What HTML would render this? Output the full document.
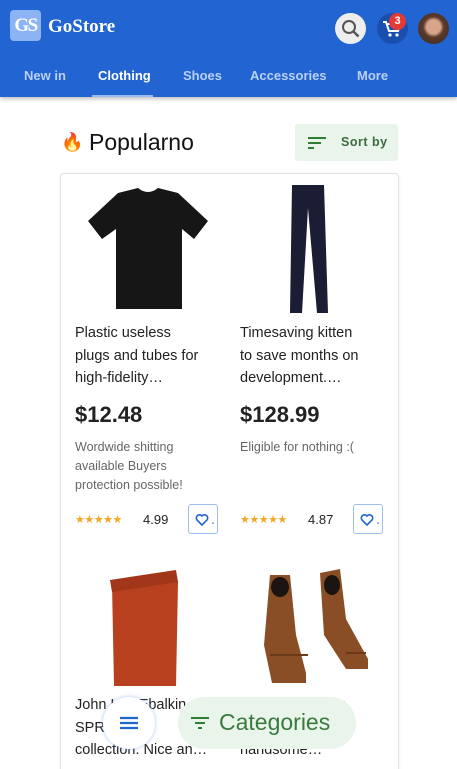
<!DOCTYPE html>
<html><head><meta charset="utf-8"><style>
*{box-sizing:border-box;margin:0;padding:0}
html,body{width:457px;height:769px;overflow:hidden}
body{background:#fff;font-family:"Liberation Sans",sans-serif;position:relative}
.hdr{position:absolute;left:0;top:0;width:457px;height:97px;background:#2264d1;box-shadow:0 2px 4px rgba(0,0,0,.25)}
.logo{position:absolute;left:10px;top:10px;width:31px;height:31px;background:#8cb4f5;border-radius:4px;color:#fff;font:bold 19px "Liberation Serif",serif;text-align:center;line-height:31px;letter-spacing:-1.5px}
.brand{position:absolute;left:48px;top:16px;color:#fff;font:bold 19px "Liberation Serif",serif}
.tabs{position:absolute;top:68px;font-size:13px;font-weight:bold;color:#b9d0f7}
.tab{position:absolute;white-space:nowrap}
.circ{position:absolute;top:13px;width:31px;height:31px;border-radius:50%}
.card{position:absolute;left:60px;top:173px;width:339px;height:600px;border:1px solid #e3e3e3;border-radius:4px;box-shadow:0 1px 3px rgba(0,0,0,.08)}
.t{position:absolute;font-size:14.5px;line-height:22.5px;color:#222}
.p{position:absolute;font-size:22px;font-weight:bold;color:#222}
.s{position:absolute;font-size:12.5px;line-height:19px;color:#666}
.st{position:absolute;color:#f5a623;font-size:11px;letter-spacing:-0.5px}
.r{position:absolute;font-size:13px;color:#222}
.hb{position:absolute;width:30px;height:30px;border:1px solid #9dbcf2;border-radius:3px}
</style></head><body>
<div class="hdr">
 <div class="logo">GS</div>
 <div class="brand">GoStore</div>
 <div class="circ" style="left:335px;background:#eee"><svg width="31" height="31"><circle cx="14" cy="14" r="6" fill="none" stroke="#555" stroke-width="2"/><path d="M18.5 18.5l5 5" stroke="#555" stroke-width="2.4"/></svg></div>
 <div class="circ" style="left:377px;background:#1b4fae"><svg width="31" height="31"><path d="M6 9h3l3 9h9l2-7H10" fill="none" stroke="#fff" stroke-width="2"/><circle cx="13" cy="22" r="1.6" fill="#fff"/><circle cx="20" cy="22" r="1.6" fill="#fff"/></svg></div>
 <div style="position:absolute;left:389px;top:13px;width:17px;height:17px;border-radius:50%;background:#e53935;color:#fff;font-size:11px;font-weight:bold;text-align:center;line-height:17px">3</div>
 <div class="circ" style="left:418px;background:radial-gradient(circle at 50% 45%,#d9a58a 0 30%,#5a3a2a 45%,#3a2a22 100%)"></div>
 <div class="tabs">
  <span class="tab" style="left:24px">New in</span>
  <span class="tab" style="left:98px;color:#fff">Clothing</span>
  <span class="tab" style="left:183px">Shoes</span>
  <span class="tab" style="left:250px">Accessories</span>
  <span class="tab" style="left:357px">More</span>
 </div>
 <div style="position:absolute;left:92px;top:95px;width:61px;height:2px;background:#9bbcf3"></div>
</div>
<div style="position:absolute;left:61px;top:132px;font-size:18px">🔥</div>
<div style="position:absolute;left:89px;top:129px;font-size:23px;color:#111">Popularno</div>
<div style="position:absolute;left:295px;top:124px;width:103px;height:37px;background:#e9f4ea;border-radius:3px">
 <svg style="position:absolute;left:13px;top:12px" width="20" height="14"><path d="M0 2h18M0 7h13M0 12h6" stroke="#2e7d32" stroke-width="2"/></svg>
 <span style="position:absolute;left:46px;top:11px;font-size:12.5px;font-weight:bold;color:#3d6b40;letter-spacing:.5px">Sort by</span>
</div>
<div class="card"></div>
<svg style="position:absolute;left:80px;top:185px" width="135" height="135"><path d="M38 8l20-5q10 8 20 0l20 5 30 28-14 18-12-10v80H36V44L22 54 8 36z" fill="#161616"/></svg>
<svg style="position:absolute;left:280px;top:183px" width="60" height="138"><path d="M12 2h32l4 128h-11l-9-105-6 105H10z" fill="#1a1d33"/></svg>
<div class="t" style="left:75px;top:322px;width:150px">Plastic useless<br>plugs and tubes for<br>high-fidelity…</div>
<div class="t" style="left:240px;top:322px;width:150px">Timesaving kitten<br>to save months on<br>development.…</div>
<div class="p" style="left:75px;top:402px">$12.48</div>
<div class="p" style="left:240px;top:402px">$128.99</div>
<div class="s" style="left:75px;top:438px">Wordwide shitting<br>available Buyers<br>protection possible!</div>
<div class="s" style="left:240px;top:438px">Eligible for nothing :(</div>
<div class="st" style="left:75px;top:513px">★★★★★</div><div class="r" style="left:143px;top:512px">4.99</div>
<div class="st" style="left:240px;top:513px">★★★★★</div><div class="r" style="left:308px;top:512px">4.87</div>
<div class="hb" style="left:188px;top:504px"><svg width="30" height="30"><path d="M13 20l-5-5a3 3 0 0 1 5-4 3 3 0 0 1 5 4z" fill="none" stroke="#2264d1" stroke-width="1.6"/><circle cx="24" cy="18" r=".8" fill="#2264d1"/></svg></div>
<div class="hb" style="left:353px;top:504px"><svg width="30" height="30"><path d="M13 20l-5-5a3 3 0 0 1 5-4 3 3 0 0 1 5 4z" fill="none" stroke="#2264d1" stroke-width="1.6"/><circle cx="24" cy="18" r=".8" fill="#2264d1"/></svg></div>
<svg style="position:absolute;left:100px;top:562px" width="90" height="128"><path d="M12 22l62-12 4 10-2 104H14z" fill="#b8401e"/><path d="M10 18l66-10 2 12-66 10z" fill="#a23618"/></svg>
<svg style="position:absolute;left:250px;top:565px" width="125" height="125"><path d="M20 10h20l6 60 10 38v10H22L14 80z" fill="#8a4e26"/><path d="M70 8l20-4 6 50 22 40v10H96L74 70z" fill="#8a4e26"/><ellipse cx="30" cy="22" rx="9" ry="10" fill="#1b1410"/><ellipse cx="82" cy="20" rx="8" ry="10" fill="#1b1410"/><path d="M20 90h38" stroke="#6b3a1a" stroke-width="2"/><path d="M96 88l20 0" stroke="#6b3a1a" stroke-width="2"/></svg>
<div class="t" style="left:75px;top:694px;width:150px">John Lee Ebalkin<br>SPRING 54<br>collection. Nice an…</div>
<div class="t" style="left:240px;top:694px;width:150px">Fabulous design.<br>Made for<br>handsome…</div>
<div style="position:absolute;left:103px;top:697px;width:52px;height:52px;border-radius:50%;background:#fff;box-shadow:0 0 4px rgba(120,160,230,.6)">
 <svg style="position:absolute;left:17px;top:19px" width="18" height="14"><path d="M0 2h18M0 7h18M0 12h18" stroke="#2264d1" stroke-width="2.2"/></svg>
</div>
<div style="position:absolute;left:178px;top:697px;width:178px;height:52px;border-radius:26px;background:#e9f4ea">
 <svg style="position:absolute;left:13px;top:19px" width="18" height="14"><path d="M0 2h18M4 7h10M7 12h4" stroke="#2e7d32" stroke-width="2"/></svg>
 <span style="position:absolute;left:41px;top:12px;font-size:23px;color:#3a7a3f">Categories</span>
</div>
</body></html>
